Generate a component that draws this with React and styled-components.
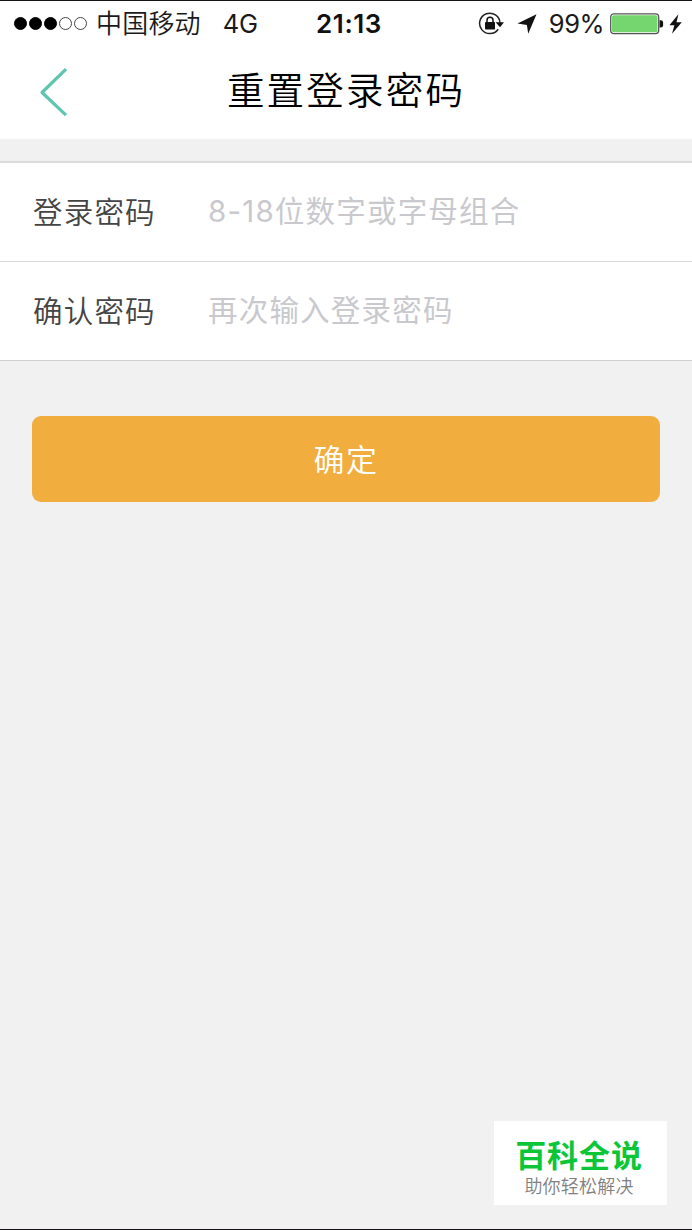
import React from 'react';
import styled, { createGlobalStyle } from 'styled-components';

const Global = createGlobalStyle`
  * { box-sizing: border-box; }
  body { margin: 0; background: #f1f1f1; }
`;

const Screen = styled.main`
  position: relative;
  display: flex;
  flex-direction: column;
  width: 692px;
  height: 1230px;
  overflow: hidden;
  background: #f1f1f1;
  border-top: 1px solid #151318;
  border-bottom: 1px solid #151318;
  font-family: Inter, "Noto Sans CJK SC", sans-serif;
  white-space: nowrap;
`;

const StatusBar = styled.header`
  display: flex;
  align-items: center;
  height: 45px;
  padding: 0 10px 0 14px;
  background: #fff;
  color: #1a1a1a;
  line-height: 45px;
`;

const StatusSide = styled.div`
  display: flex;
  align-items: center;
  flex: 1;
  justify-content: ${(p) => (p.$end ? 'flex-end' : 'flex-start')};
`;

const Signal = styled.div`
  display: flex;
  gap: 2px;
  margin-right: 9px;
`;

const Dot = styled.span`
  width: 13px;
  height: 13px;
  border-radius: 50%;
  border: 1px solid ${(p) => (p.$on ? '#000' : '#444')};
  background: ${(p) => (p.$on ? '#000' : 'transparent')};
`;

const Carrier = styled.span`
  font-size: 26px;
  font-weight: 350;
  letter-spacing: 0.2px;
`;

const Network = styled.span`
  margin-left: 22px;
  font-size: 25.5px;
  letter-spacing: -0.3px;
`;

const Clock = styled.time`
  padding-left: 2px;
  font-size: 26px;
  font-weight: 600;
  letter-spacing: 0.6px;
  color: #111;
`;

const Percent = styled.span`
  margin: 0 6px 0 12px;
  font-size: 25.5px;
  letter-spacing: -0.5px;
`;

const NavBar = styled.nav`
  display: grid;
  grid-template-columns: 110px 1fr 110px;
  align-items: center;
  height: 93px;
  padding-bottom: 3px;
  background: #fff;
`;

const BackButton = styled.button`
  display: flex;
  width: 30px;
  margin: 1px 0 0 39px;
  padding: 0;
  border: 0;
  background: none;
`;

const Title = styled.h1`
  margin: 0;
  text-align: center;
  font-size: 37.5px;
  font-weight: 350;
  line-height: 60px;
  letter-spacing: 2.2px;
  color: #000;
`;

const Form = styled.form`
  display: flex;
  flex-direction: column;
  margin-top: 22px;
`;

const Fields = styled.div`
  border-top: 2px solid #dcdcdc;
  border-bottom: 1px solid #d0d0d0;
  background: #fff;
`;

const Field = styled.label`
  display: flex;
  align-items: center;
  height: ${(p) => p.$height}px;
  padding: 0 0 ${(p) => (p.$divided ? 0 : 1)}px 33px;
  border-top: ${(p) => (p.$divided ? '1px solid #d9d9d9' : '0')};
`;

const FieldName = styled.span`
  width: 175px;
  font-size: 29.5px;
  font-weight: 350;
  letter-spacing: 1.2px;
  line-height: 44px;
  color: #444;
`;

const FieldInput = styled.input`
  flex: 1;
  height: 44px;
  padding: 0 0 2px;
  border: 0;
  outline: 0;
  background: transparent;
  font-family: inherit;
  font-size: 29.5px;
  letter-spacing: 1.2px;
  &::placeholder { color: #c9c9cd; opacity: 1; font-weight: 390; }
`;

const Submit = styled.button`
  height: 86px;
  margin: 55px 32px 0;
  padding: 0 0 4px;
  border: 0;
  border-radius: 9px;
  background: #f2ad3f;
  color: #fff;
  font-family: inherit;
  font-size: 31px;
  font-weight: 350;
  letter-spacing: 1.5px;
`;

const Watermark = styled.aside`
  position: absolute;
  right: 25px;
  bottom: 24px;
  width: 173px;
  height: 84px;
  padding: 15px 3px 0 0;
  background: #fff;
  text-align: center;
`;

const Brand = styled.div`
  font-size: 31px;
  font-weight: 700;
  line-height: 40px;
  letter-spacing: 0.9px;
  color: #0dc637;
`;

const Slogan = styled.div`
  font-size: 18px;
  font-weight: 350;
  line-height: 21px;
  letter-spacing: 0.2px;
  color: #808080;
`;

const RotationLock = () => (
  <svg width="27" height="24" viewBox="0 0 27 24" fill="none">
    <path d="M20.2 17.2A10.2 10.2 0 1 1 22 11" stroke="#222" strokeWidth="1.5" />
    <path d="M17.6 10.2h8.4L22 15.2z" fill="#111" />
    <rect x="7" y="10" width="10" height="7.5" rx="0.8" fill="#111" />
    <path d="M9 10.5V8.3a3 3 0 0 1 6 0v2.2" stroke="#111" strokeWidth="1.5" />
  </svg>
);

const LocationArrow = () => (
  <svg width="20" height="20" viewBox="0 0 20 20">
    <path d="M19.5 .3 11.2 19.8 9.9 10.9.5 9.6z" fill="#111" />
  </svg>
);

const Battery = () => (
  <svg width="54" height="22" viewBox="0 0 54 22">
    <rect x=".7" y=".9" width="48" height="19.7" rx="3" fill="#fff" stroke="#555" strokeWidth="1.3" />
    <rect x="2" y="2.2" width="45.4" height="17.1" rx="1.8" fill="#75d56e" />
    <path d="M49.6 7.2h1.2q2.3 0 2.3 2.3v2.7q0 2.3-2.3 2.3h-1.2z" fill="#111" />
  </svg>
);

const Bolt = () => (
  <svg width="13" height="20" viewBox="0 0 13 20">
    <path d="M9.4.3.4 11.2h5L3 19.7 12.8 8.2H7.5z" fill="#111" />
  </svg>
);

const Icon = styled.span`
  display: flex;
  margin-left: ${(p) => p.$gap || 0}px;
`;

export default function App() {
  return (
    <>
      <Global />
      <Screen>
        <StatusBar>
          <StatusSide>
            <Signal>
              {[true, true, true, false, false].map((on, i) => <Dot key={i} $on={on} />)}
            </Signal>
            <Carrier>中国移动</Carrier>
            <Network>4G</Network>
          </StatusSide>
          <Clock>21:13</Clock>
          <StatusSide $end>
            <Icon><RotationLock /></Icon>
            <Icon $gap={12}><LocationArrow /></Icon>
            <Percent>99%</Percent>
            <Icon><Battery /></Icon>
            <Icon $gap={5}><Bolt /></Icon>
          </StatusSide>
        </StatusBar>
        <NavBar>
          <BackButton type="button" aria-label="返回">
            <svg width="30" height="50" viewBox="0 0 30 50" fill="none">
              <path d="M27 2.2 3 25.5 27 48.2" stroke="#5fc4b0" strokeWidth="3.2" strokeLinejoin="round" />
            </svg>
          </BackButton>
          <Title>重置登录密码</Title>
        </NavBar>
        <Form>
          <Fields>
            <Field $height={98}>
              <FieldName>登录密码</FieldName>
              <FieldInput type="text" placeholder="8-18位数字或字母组合" />
            </Field>
            <Field $height={99} $divided>
              <FieldName>确认密码</FieldName>
              <FieldInput type="text" placeholder="再次输入登录密码" />
            </Field>
          </Fields>
          <Submit type="button">确定</Submit>
        </Form>
        <Watermark>
          <Brand>百科全说</Brand>
          <Slogan>助你轻松解决</Slogan>
        </Watermark>
      </Screen>
    </>
  );
}
